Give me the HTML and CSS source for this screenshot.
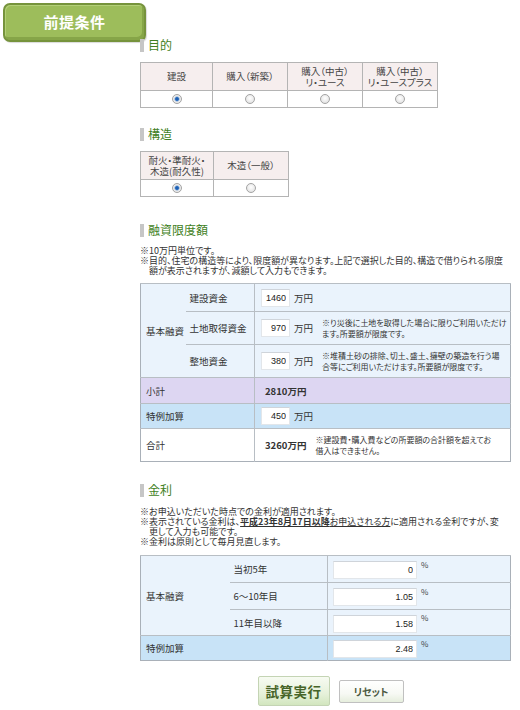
FILE: index.html
```html
<!DOCTYPE html>
<html lang="ja">
<head>
<meta charset="utf-8">
<title>前提条件</title>
<link rel="stylesheet" href="styles.css">
</head>
<body>
<div class="tab">前提条件</div>
<div class="content">
  <h2 class="title first">目的</h2>
  <table class="choice purpose">
    <tr>
      <th class="w72">建設</th>
      <th class="w75">購入（新築）</th>
      <th class="w75">購入（中古）<br>リ・ユース</th>
      <th class="w75">購入（中古）<br>リ・ユースプラス</th>
    </tr>
    <tr>
      <td><input class="radio" type="radio" name="purpose" checked></td>
      <td><input class="radio" type="radio" name="purpose"></td>
      <td><input class="radio" type="radio" name="purpose"></td>
      <td><input class="radio" type="radio" name="purpose"></td>
    </tr>
  </table>

  <h2 class="title t-struct">構造</h2>
  <table class="choice struct">
    <tr>
      <th class="w73">耐火・準耐火・<br>木造(耐久性)</th>
      <th class="w75">木造（一般）</th>
    </tr>
    <tr>
      <td><input class="radio" type="radio" name="struct" checked></td>
      <td><input class="radio" type="radio" name="struct"></td>
    </tr>
  </table>

  <h2 class="title t-loan">融資限度額</h2>
  <div class="notes loan-notes">
    <p>※10万円単位です。</p>
    <p>※目的、住宅の構造等により、限度額が異なります。上記で選択した目的、構造で借りられる限度<br>額が表示されますが、減額して入力もできます。</p>
  </div>
  <table class="grid loan">
    <colgroup><col class="lc1"><col class="lc2"><col></colgroup>
    <tr class="basic h28">
      <td class="grp" rowspan="3">基本融資</td>
      <td class="sub">建設資金</td>
      <td class="val"><div class="vrow"><input class="num" type="text" value="1460"><span class="unit">万円</span></div></td>
    </tr>
    <tr class="basic h33">
      <td class="sub">土地取得資金</td>
      <td class="val"><div class="vrow"><input class="num" type="text" value="970"><span class="unit">万円</span><span class="note">※り災後に土地を取得した場合に限りご利用いただけ<br>ます。所要額が限度です。</span></div></td>
    </tr>
    <tr class="basic h33">
      <td class="sub">整地資金</td>
      <td class="val"><div class="vrow"><input class="num" type="text" value="380"><span class="unit">万円</span><span class="note">※堆積土砂の排除、切土、盛土、擁壁の築造を行う場<br>合等にご利用いただけます。所要額が限度です。</span></div></td>
    </tr>
    <tr class="subtotal h26">
      <td class="lab" colspan="2">小計</td>
      <td class="val"><div class="vrow"><span class="sum">2810万円</span></div></td>
    </tr>
    <tr class="special h25">
      <td class="lab" colspan="2">特例加算</td>
      <td class="val"><div class="vrow"><input class="num" type="text" value="450"><span class="unit">万円</span></div></td>
    </tr>
    <tr class="total h33">
      <td class="lab" colspan="2">合計</td>
      <td class="val"><div class="vrow"><span class="sum">3260万円</span><span class="note">※建設費・購入費などの所要額の合計額を超えてお<br>借入はできません。</span></div></td>
    </tr>
  </table>

  <h2 class="title t-rate">金利</h2>
  <div class="notes rate-notes">
    <p>※お申込いただいた時点での金利が適用されます。</p>
    <p>※表示されている金利は、<b class="ul">平成23年8月17日以降</b><span class="ul">お申込される方</span>に適用される金利ですが、変<br>更して入力も可能です。</p>
    <p>※金利は原則として毎月見直します。</p>
  </div>
  <table class="grid rate">
    <colgroup><col class="rc1"><col class="rc2"><col></colgroup>
    <tr class="basic h27 dot">
      <td class="grp" rowspan="3">基本融資</td>
      <td class="sub">当初5年</td>
      <td class="val"><input class="num wide" type="text" value="0"><span class="pct">%</span></td>
    </tr>
    <tr class="basic h27 dot">
      <td class="sub">6〜10年目</td>
      <td class="val"><input class="num wide" type="text" value="1.05"><span class="pct">%</span></td>
    </tr>
    <tr class="basic h26">
      <td class="sub">11年目以降</td>
      <td class="val"><input class="num wide" type="text" value="1.58"><span class="pct">%</span></td>
    </tr>
    <tr class="special h25">
      <td class="lab" colspan="2">特例加算</td>
      <td class="val"><input class="num wide" type="text" value="2.48"><span class="pct">%</span></td>
    </tr>
  </table>

  <div class="buttons">
    <button class="btn run" type="button">試算実行</button>
    <button class="btn reset" type="button">リセット</button>
  </div>
</div>
</body>
</html>
```

FILE: styles.css
```css
* { box-sizing: border-box; }

body {
  margin: 0;
  font-family: "Noto Sans CJK JP", "Liberation Sans", sans-serif;
  font-size: 9.5px;
  color: #333;
  font-feature-settings: "palt";
  background: #fff;
}

p { margin: 0; }

.tab {
  margin: 3px 0 0 3px;
  width: 143px;
  height: 39px;
  border: 2px solid #76933c;
  border-radius: 7px;
  background: #9dbd5b;
  box-shadow: inset -2px -3px 0 #86a548, inset 1px 1px 0 #b3cf78, 1px 1px 1px rgba(0,0,0,0.15);
  color: #fff;
  font-weight: bold;
  font-size: 15px;
  line-height: 34px;
  text-align: center;
  letter-spacing: 0.5px;
}

.content {
  margin-left: 140px;
  width: 371px;
}

.title {
  margin: 0;
  height: 13px;
  border-left: 4px solid #c6c6c6;
  padding-left: 4px;
  font-size: 12px;
  line-height: 12px;
  font-weight: normal;
  color: #3f7f23;
}
.title.first { margin-top: -3px; }
.t-struct { margin-top: 20px; }
.t-loan { margin-top: 27px; }
.t-rate { margin-top: 22px; }

/* choice tables */
.choice {
  border-collapse: collapse;
  margin-top: 10px;
}
.choice th, .choice td {
  border: 1px solid #b4b4b4;
  padding: 0;
  text-align: center;
  vertical-align: middle;
}
.choice th {
  height: 28px;
  background: #f6eeee;
  font-weight: normal;
  font-size: 9.5px;
  line-height: 11px;
  color: #444;
}
.choice td {
  height: 17px;
  background: #fff;
}
.w72 { width: 72px; }
.w73 { width: 73px; }
.w75 { width: 75px; }

.radio {
  -webkit-appearance: none;
  appearance: none;
  display: block;
  margin: 0 auto;
  width: 10px;
  height: 10px;
  border-radius: 50%;
  border: 1px solid #a4a4a4;
  background: radial-gradient(circle at 50% 40%, #ffffff 0%, #e6e6e6 70%, #d6d6d6 100%);
}
.radio:checked {
  background: radial-gradient(circle, #174f9a 0%, #2f72c4 28%, #9fb9d8 40%, #f0f0f0 55%, #dcdcdc 100%);
}

/* notes */
.notes {
  font-size: 9px;
  line-height: 10px;
  color: #333;
  white-space: nowrap;
}
.notes p {
  padding-left: 9px;
  text-indent: -9px;
}
.loan-notes { margin-top: 9px; }
.rate-notes { margin-top: 10px; }
.ul { text-decoration: underline; }

/* grids */
.grid {
  width: 371px;
  table-layout: fixed;
  border-collapse: collapse;
  border: 1px solid #a9b0b8;
}
.grid td {
  padding: 0;
  border: 0;
  border-top: 1px solid #b8bec4;
  vertical-align: middle;
  color: #333;
  white-space: nowrap;
  overflow: visible;
}
.grid td.val { border-left: 1px solid #b8bec4; }
.loan { margin-top: 7px; }
.lc1 { width: 45px; }
.lc2 { width: 69px; }
.rc1 { width: 89px; }
.rc2 { width: 98px; }

.h25 { height: 25px; }
.h26 { height: 26px; }
.h27 { height: 27px; }
.h28 { height: 28px; }
.h32 { height: 32px; }
.h33 { height: 33px; }

.basic td { background: #eaf3fc; }
.subtotal td { background: #ddd6f2; }
.special td { background: #c8e3f7; }
.total td { background: #fff; }

.grid td.grp, .grid td.lab { padding-left: 5px; }
.grid td.sub { padding-left: 4px; }
.loan td.val { padding-left: 6px; }

.vrow {
  display: flex;
  align-items: center;
}

.num {
  width: 29px;
  height: 18px;
  margin: 0;
  padding: 0 3px 0 0;
  border: 1px solid #e2e6ea;
  border-top-color: #cfd4da;
  background: #fff;
  text-align: right;
  font-family: "Liberation Sans", sans-serif;
  font-size: 9px;
  color: #222;
  flex: none;
}
.unit {
  margin-left: 4px;
  font-size: 9.5px;
  flex: none;
}
.note {
  margin-left: 9px;
  font-size: 8px;
  line-height: 11px;
  white-space: nowrap;
}
.sum {
  margin-left: 4px;
  font-weight: bold;
  font-size: 9.5px;
  flex: none;
}
.total .note { margin-left: 9px; }

/* rate table */
.rate { margin-top: 8px; }
.rate .dot td.sub, .rate .dot td.val { border-bottom: 1px dotted #a8adb3; }
.rate td.val { padding-left: 5px; }
.num.wide { width: 84px; }
.pct {
  margin-left: 4px;
  font-size: 8px;
  vertical-align: 5px;
  color: #444;
}
.rate .val input { vertical-align: middle; }

/* buttons */
.buttons {
  display: flex;
  justify-content: center;
  align-items: center;
  gap: 9px;
  margin-top: 15px;
  padding-left: 10px;
}
.btn {
  margin: 0;
  font-family: "Noto Sans CJK JP", sans-serif;
  font-weight: bold;
  cursor: pointer;
  font-feature-settings: "palt";
}
.btn.run {
  width: 72px;
  height: 30px;
  border: 1px solid #c4d4b4;
  border-radius: 2px;
  background: linear-gradient(#f7fbf2, #e6f1da 60%, #d2e6be);
  color: #466428;
  font-size: 13.5px;
  letter-spacing: 0.5px;
}
.btn.reset {
  width: 65px;
  height: 23px;
  border: 1px solid #c0c0c0;
  border-radius: 2px;
  background: linear-gradient(#ffffff, #f7f9f4 60%, #e6eedd);
  color: #4e5b42;
  font-size: 10px;
}
```
